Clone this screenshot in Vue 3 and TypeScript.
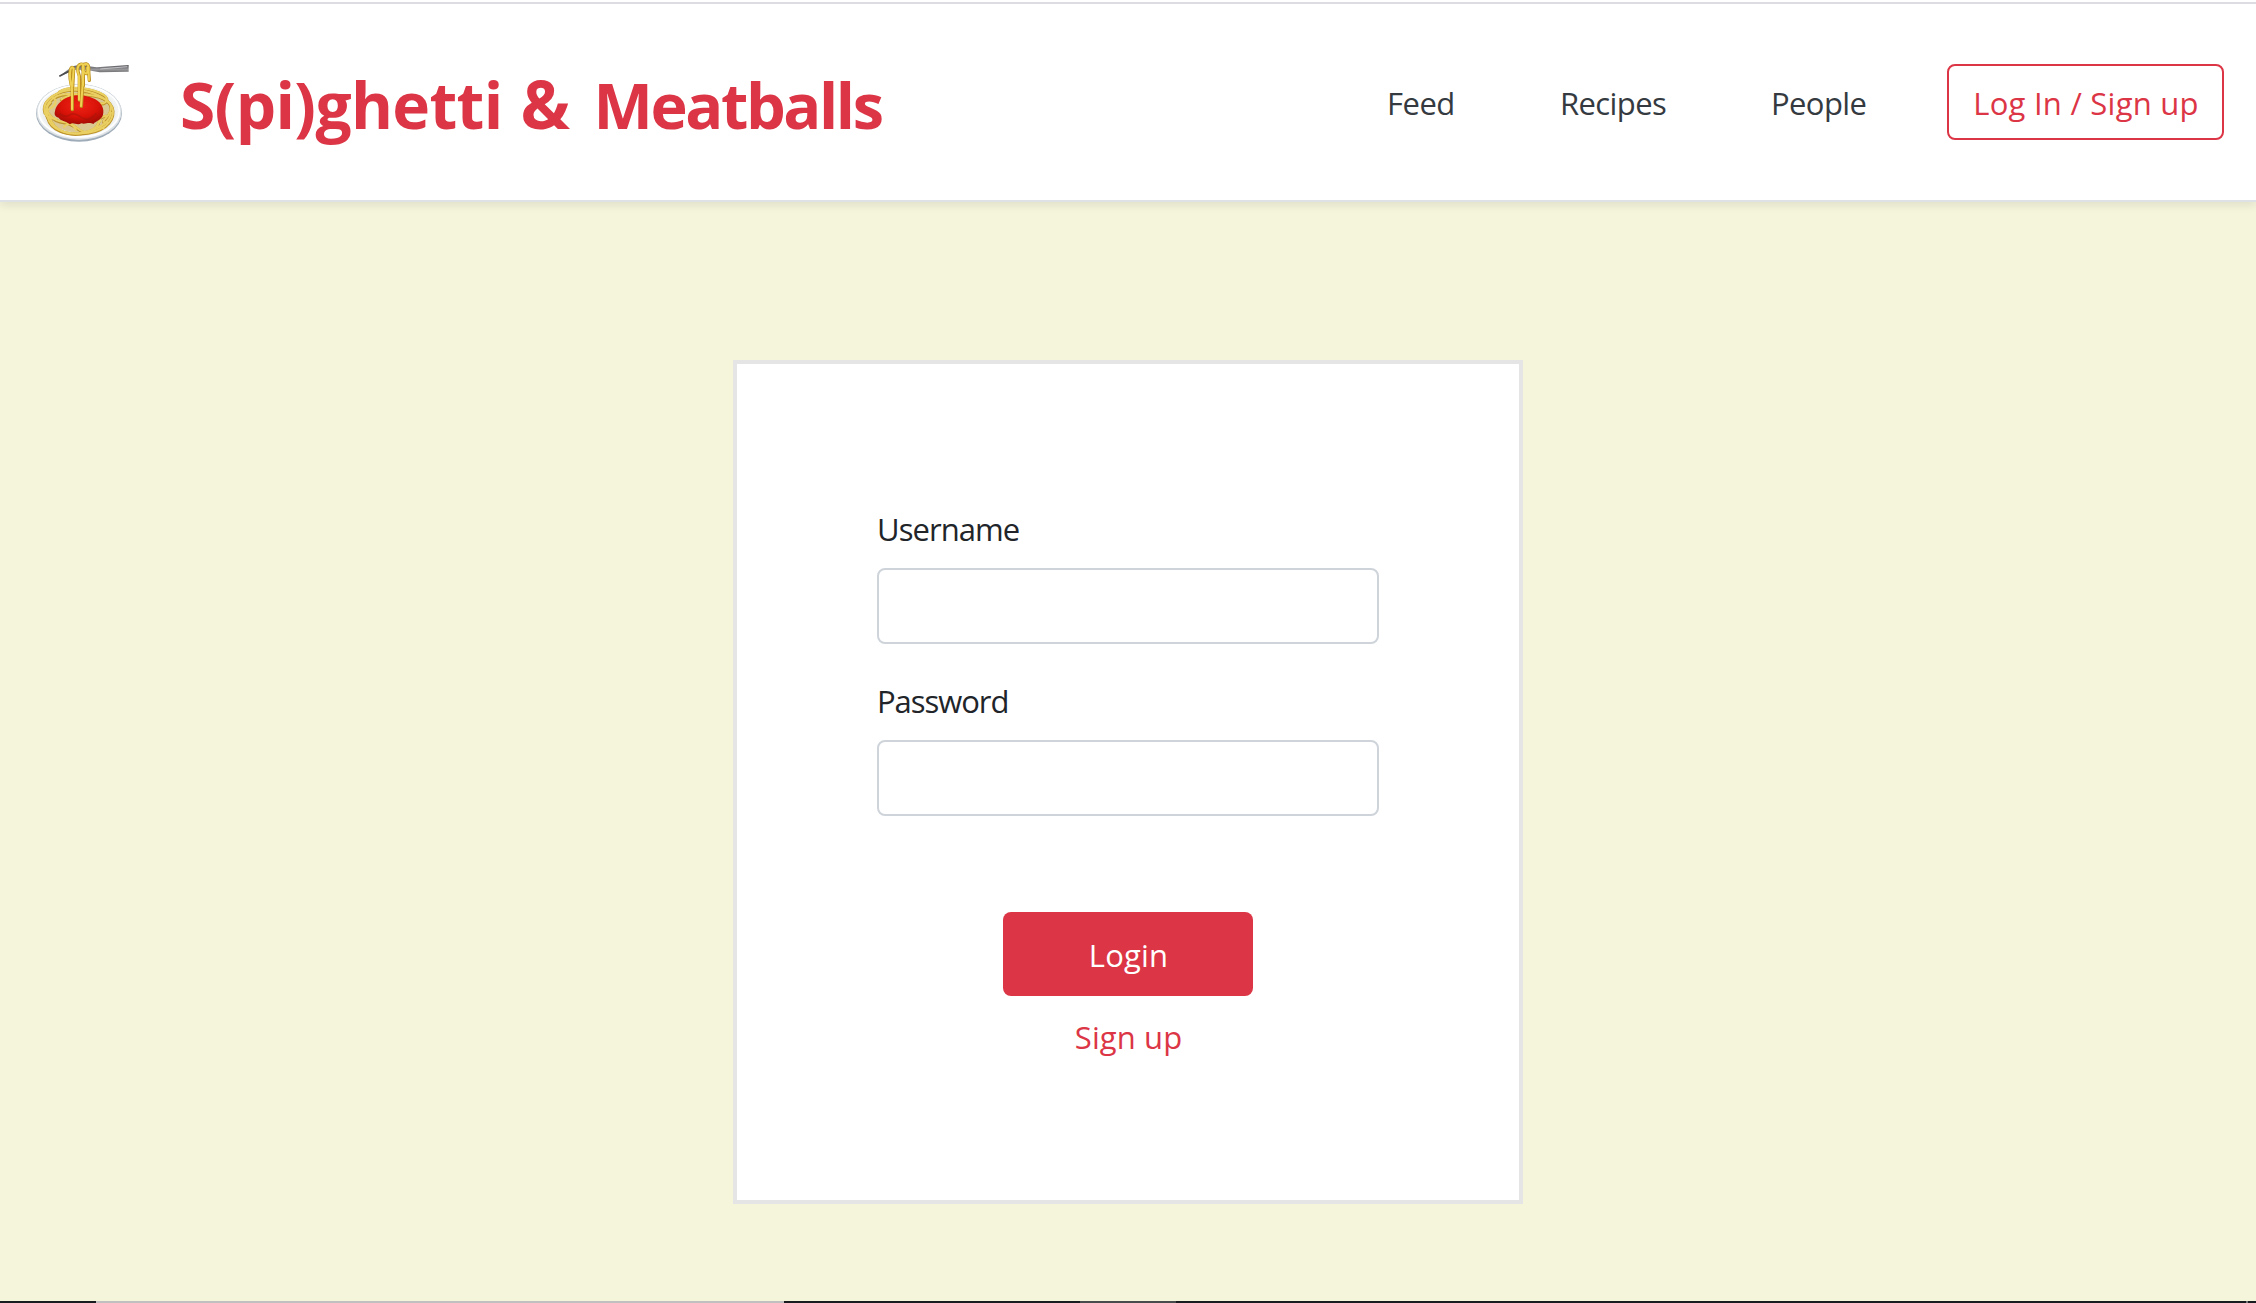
<script setup lang="ts">
import { ref } from 'vue'

interface NavItem {
  label: string
  name: string
}

const navItems: NavItem[] = [
  { label: 'Feed', name: 'feed' },
  { label: 'Recipes', name: 'recipes' },
  { label: 'People', name: 'people' },
]

const username = ref('')
const password = ref('')
</script>

<template>
  <div class="page">
    <header class="header">
      <svg class="logo" viewBox="0 0 390 330" aria-hidden="true">
        <defs>
          <radialGradient id="plate">
            <stop offset="0.7" stop-color="#dcdfdd" />
            <stop offset="0.9" stop-color="#f4f6f6" />
            <stop offset="1" stop-color="#d5dbe0" />
          </radialGradient>
          <radialGradient id="sauce" cx="0.5" cy="0.35" r="0.65">
            <stop offset="0" stop-color="#ee2416" />
            <stop offset="0.6" stop-color="#d91208" />
            <stop offset="1" stop-color="#a30d05" />
          </radialGradient>
          <linearGradient id="metal" x1="0" y1="0" x2="0" y2="1">
            <stop offset="0" stop-color="#55565a" />
            <stop offset="0.4" stop-color="#98989b" />
            <stop offset="1" stop-color="#38393c" />
          </linearGradient>
        </defs>
        <ellipse cx="177" cy="204" rx="129" ry="86" fill="#9eabb8" />
        <ellipse cx="177" cy="201" rx="128" ry="84" fill="url(#plate)" />
        <ellipse cx="177" cy="199" rx="121" ry="77" fill="none" stroke="#fff" stroke-width="5" />
        <ellipse cx="177" cy="201" rx="98" ry="62" fill="#d8b860" opacity="0.6" />
        <g fill="none" stroke-linecap="round">
          <g stroke="#bd932b" stroke-width="9">
            <path d="M75 205C62 165 120 134 166 136S277 164 279 199 246 265 182 267 80 246 82 202" />
            <path d="M86 224C62 190 94 150 143 149S261 151 272 183 225 235 264 235" />
            <path d="M92 174C65 197 95 229 135 234S178 276 215 257 222 220 258 214" />
            <path d="M118 142C155 118 225 136 250 151S253 187 222 172 168 137 124 165" />
            <path d="M89 217C100 262 153 277 201 263S270 231 273 205" />
          </g>
          <g stroke="#ead063" stroke-width="6">
            <path d="M75 203C62 163 120 132 166 134S277 162 279 197 246 263 182 265 80 244 82 200" />
            <path d="M86 222C62 188 94 148 143 147S261 149 272 181 225 233 264 233" />
            <path d="M92 172C65 195 95 227 135 232S178 274 215 255 222 218 258 212" />
            <path d="M118 140C155 116 225 134 250 149S253 185 222 170 168 135 124 163" />
            <path d="M89 215C100 260 153 275 201 261S270 229 273 203" />
            <path d="M98 156Q120 172 88 192T108 222M242 226Q220 251 251 250M132 246Q153 223 168 256" />
          </g>
        </g>
        <path d="M105 199C107 179 127 162 148 155 171 146 207 151 226 163 245 173 254 193 249 209 244 226 229 226 220 237 205 229 198 239 184 235 171 244 160 229 150 238 137 227 121 228 116 218 105 216 102 208 105 199Z" fill="url(#sauce)" />
        <path d="M119 207Q137 219 149 210T184 217T229 205" fill="none" stroke="#8e170b" stroke-width="5" opacity="0.35" />
        <path d="M118 94 150 69Q162 58 194 62L230 67 326 60V80L239 82 205 76 164 75Z" fill="url(#metal)" />
        <path d="M118 94 160 72" fill="none" stroke="#4c4d50" stroke-width="5" />
        <path d="M241 72 322 65" fill="none" stroke="#c2c2c5" stroke-width="3" />
        <g fill="none" stroke-linecap="round">
          <g stroke="#bd901f" stroke-width="10">
            <path d="M157 194V131Q147 98 151 77 154 61 161 71L158 125" />
            <path d="M178 165V93Q167 63 181 58 191 54 191 70L188 118 184 184" />
            <path d="M190 122V75Q185 55 199 57 208 59 206 80L208 106M188 75Q204 99 202 68" />
          </g>
          <g stroke="#efd153" stroke-width="6">
            <path d="M156 193V131Q147 98 151 77 154 61 161 71L157 125" />
            <path d="M177 164V93Q167 63 181 58 191 54 191 70L188 118 183 183" />
            <path d="M189 121V75Q185 55 199 57 208 59 206 80L207 105M188 75Q204 99 202 68" />
          </g>
        </g>
      </svg>
      <h1 class="brand">S(pi)ghetti <span class="amp">&amp;</span> <span class="last-word">Meatballs</span></h1>
      <nav class="nav">
        <a v-for="item in navItems" :key="item.name" :class="['nav-link', item.name]">{{ item.label }}</a>
        <a class="account">Log In / Sign up</a>
      </nav>
    </header>
    <main class="content">
      <form class="card" @submit.prevent>
        <label class="label username" for="username">Username</label>
        <input id="username" v-model="username" class="input" type="text" />
        <label class="label password" for="password">Password</label>
        <input id="password" v-model="password" class="input" type="password" />
        <button class="submit" type="submit">Login</button>
        <a class="signup">Sign up</a>
      </form>
    </main>
    <footer class="strip">
      <span class="dark first"></span>
      <span class="light"></span>
      <span class="dark second"></span>
      <span class="mid"></span>
      <span class="dark third"></span>
      <span class="tick"></span>
      <span class="dark last"></span>
    </footer>
  </div>
</template>

<style>
body {
  margin: 0;
}
</style>

<style scoped>
.page {
  display: flex;
  flex-direction: column;
  box-sizing: border-box;
  height: 1303px;
  overflow: hidden;
  background: #f5f5dc;
  color: #212529;
  font-family: "Open Sans", "Noto Sans", sans-serif;
  font-size: 31px;
  line-height: 48px;
}
.page * {
  box-sizing: border-box;
}
.header {
  display: flex;
  align-items: flex-start;
  flex: none;
  height: 202px;
  padding: 41px 32px 0 20px;
  border-bottom: 2px solid #dee2e6;
  background: linear-gradient(#fff 2px, #dcdce2 2px, #dcdce2 4px, #fff 4px);
  box-shadow: 0 4px 8px rgba(0, 0, 0, 0.08);
  white-space: nowrap;
}
.logo {
  flex: none;
  width: 130px;
  height: 110px;
  margin-top: 4px;
}
.brand {
  margin: 22px 0 0 30px;
  color: #dc3545;
  font-size: 64px;
  font-weight: 700;
  line-height: 84px;
  letter-spacing: -0.65px;
}
.amp {
  margin: 0 6px 0 2px;
  font-size: 66px;
  line-height: 1;
}
.last-word {
  margin-left: 2px;
  font-size: 63px;
  line-height: 1;
  letter-spacing: -2.4px;
}
.nav {
  display: flex;
  margin: 23px 0 0 auto;
}
.nav-link {
  padding-top: 15px;
  color: #343a40;
}
.feed {
  width: 173px;
  letter-spacing: -0.5px;
}
.recipes {
  width: 211px;
  letter-spacing: -0.6px;
}
.people {
  width: 176px;
  letter-spacing: -0.6px;
}
.account {
  width: 277px;
  height: 76px;
  padding: 13px 0 0 1px;
  border: 2px solid #dc3545;
  border-radius: 8px;
  color: #dc3545;
  text-align: center;
  letter-spacing: 0.25px;
}
.content {
  display: flex;
  flex: 1;
  align-items: flex-start;
  justify-content: center;
  padding-top: 158px;
}
.card {
  display: flex;
  flex-direction: column;
  width: 790px;
  height: 844px;
  padding: 140px 140px 0;
  border: 4px solid #e5e5e5;
  background: #fff;
}
.card > * {
  flex: none;
}
.label {
  height: 64px;
  padding-top: 1px;
}
.username {
  letter-spacing: -0.95px;
}
.password {
  margin-top: 32px;
  letter-spacing: -1.05px;
}
.input {
  width: 502px;
  height: 76px;
  padding: 12px 24px;
  border: 2px solid #ced4da;
  border-radius: 8px;
  background: #fff;
  font: inherit;
  outline: none;
}
.submit {
  align-self: center;
  width: 250px;
  height: 84px;
  margin-top: 96px;
  padding: 2px 0 0 1px;
  border: 0;
  border-radius: 8px;
  background: #dc3545;
  color: #fff;
  font: inherit;
  letter-spacing: 0.2px;
}
.signup {
  align-self: center;
  margin-top: 17px;
  padding-left: 1px;
  color: #dc3545;
  letter-spacing: 0.1px;
}
.strip {
  display: flex;
  flex: none;
  height: 2px;
}
.dark {
  background: #181c1e;
}
.first {
  width: 96px;
}
.light {
  width: 688px;
  background: #bfc0bf;
}
.second {
  width: 296px;
}
.mid {
  width: 96px;
  background: #484b4c;
}
.third {
  width: 1070px;
}
.tick {
  width: 2px;
  background: #777a7b;
}
.last {
  flex: 1;
}
</style>
